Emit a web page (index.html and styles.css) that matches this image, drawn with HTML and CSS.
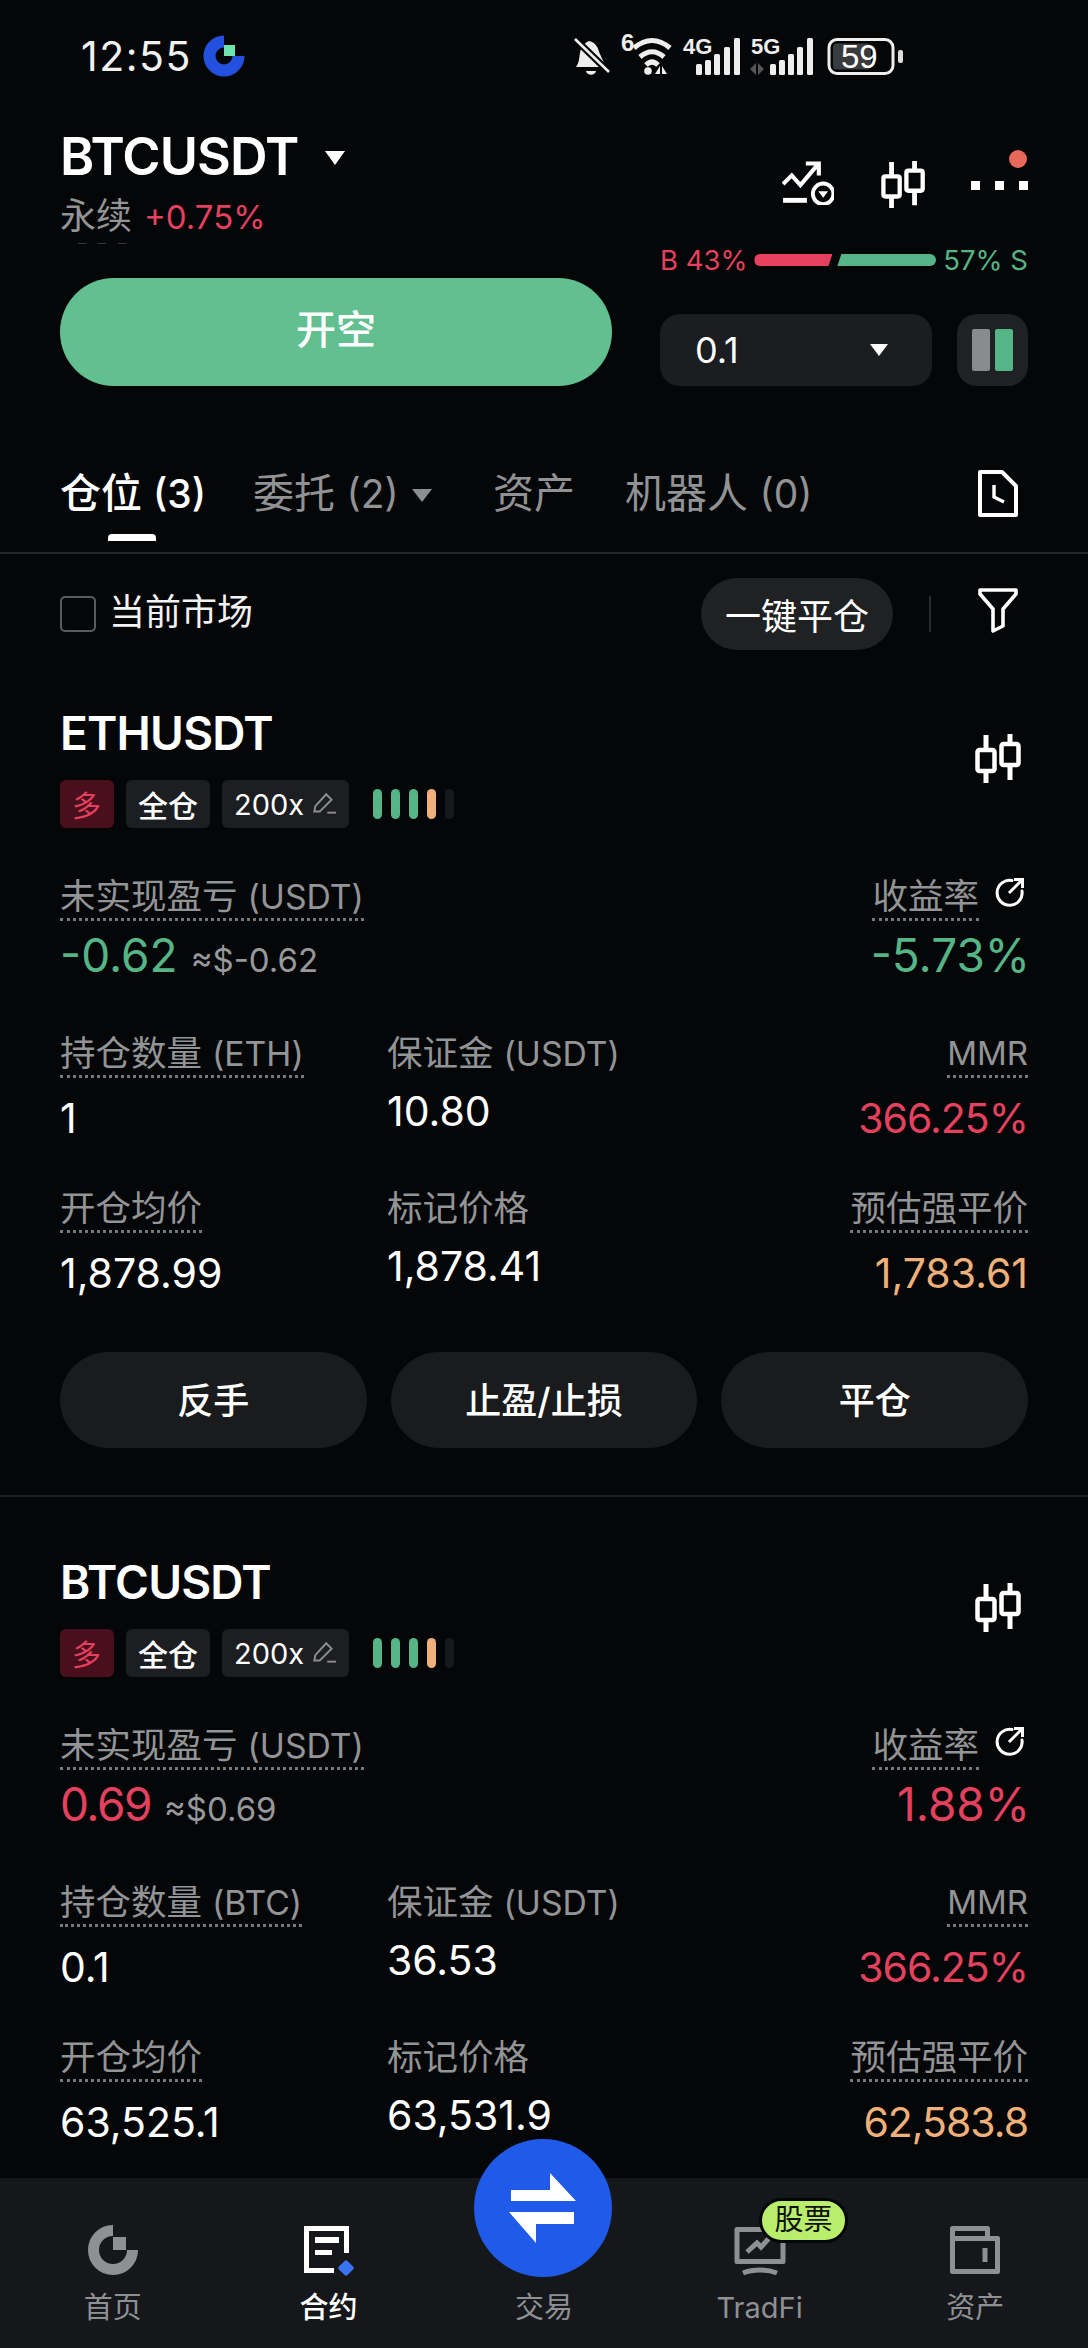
FILE: index.html
```html
<!DOCTYPE html>
<html lang="zh-CN">
<head>
    <meta charset="UTF-8">
    <meta name="viewport" content="width=device-width, initial-scale=1.0">
    <title>BTCUSDT 永续</title>
    <link rel="stylesheet" href="styles.css">
</head>
<body>
<div class="page">
    <svg class="defs" width="0" height="0">
        <symbol id="candles" viewBox="0 0 48 50">
            <path d="M11 1v48M35 0v46" stroke="currentColor" stroke-width="5" fill="none"/>
            <rect x="2.500" y="16" width="17" height="21" rx="2" fill="#050607" stroke="currentColor" stroke-width="4.500"/>
            <rect x="26.500" y="10" width="17" height="21" rx="2" fill="#050607" stroke="currentColor" stroke-width="4.500"/>
        </symbol>
        <symbol id="refresh" viewBox="0 0 30 30">
            <path d="M17 3.500A12.500 12.500 0 1 0 27 14" stroke="currentColor" stroke-width="3" fill="none" stroke-linecap="round"/>
            <path d="M14 16L27 3M19 2.500h8.500V11" stroke="currentColor" stroke-width="3" fill="none"/>
        </symbol>
        <symbol id="pen" viewBox="0 0 24 24">
            <path d="M3 19l1-5L14 3l5 5L8 19z" stroke="currentColor" stroke-width="1.800" fill="none"/>
            <path d="M15 20h8" stroke="currentColor" stroke-width="1.800"/>
        </symbol>
    </svg>

    <div class="status-bar">
        <span class="clock">12:55</span>
        <svg class="status-logo" width="42" height="42" viewBox="0 0 42 42">
            <path d="M21 6.500a14.500 14.500 0 1 0 14.500 14.500" stroke="#2450e0" stroke-width="12" fill="none"/>
            <rect x="21" y="10" width="11" height="11" fill="#6fe3b0"/>
        </svg>
        <svg class="status-icons" width="350" height="70" viewBox="565 20 350 70">
            <path d="M576 66c3-4 3-8 4-14 1-7 5-10 9-12 5 1 9 5 10 11l7 15z" fill="#eee"/>
            <path d="M586 70h10c-1 5-9 5-10 0z" fill="#eee"/>
            <path d="M575 38l34 33" stroke="#050607" stroke-width="7"/>
            <path d="M575 38l34 33" stroke="#eee" stroke-width="2.600"/>
            <text x="621" y="50" class="net-six">6</text>
            <path d="M634 47c12-10 24-10 36 0M640 56c8-7 16-7 24 0M646 64c4-4 8-4 12 0" stroke="#eee" stroke-width="5" fill="none"/>
            <circle cx="648" cy="70" r="3.800" fill="#eee"/>
            <path d="M655 73l5-8v8zM662 65l5 8h-5z" fill="#eee"/>
            <text x="683" y="53" class="net-text">4G</text>
            <g fill="#eee">
                <rect x="696" y="63" width="6" height="11" rx="1.500"/><rect x="705" y="59" width="6" height="15" rx="1.500"/>
                <rect x="714" y="53" width="6" height="21" rx="1.500"/><rect x="724" y="46" width="6" height="28" rx="1.500"/>
                <rect x="734" y="37" width="6" height="37" rx="1.500"/>
            </g>
            <text x="751" y="53" class="net-text">5G</text>
            <path d="M750 68l6-6v12zM758 62l6 6-6 6z" fill="#555"/>
            <g fill="#eee">
                <rect x="770" y="63" width="6" height="11" rx="1.500"/><rect x="779" y="59" width="6" height="15" rx="1.500"/>
                <rect x="788" y="53" width="6" height="21" rx="1.500"/><rect x="797" y="46" width="6" height="28" rx="1.500"/>
                <rect x="807" y="37" width="6" height="37" rx="1.500"/>
            </g>
            <rect x="829" y="38.500" width="64" height="34" rx="8" fill="#050607" stroke="#eee" stroke-width="3"/>
            <rect x="833" y="42.500" width="38" height="26" rx="4" fill="#3a3b3d"/>
            <text x="841" y="67" class="batt-text">59</text>
            <rect x="898" y="49" width="5" height="13" rx="2" fill="#ddd"/>
        </svg>
    </div>

    <div class="header">
        <div class="pair">
            <div class="pair-name">BTCUSDT <span class="tri tri-title"></span></div>
            <div class="pair-sub"><span class="muted">永续</span><span class="red change">+0.75%</span></div>
            <div class="pair-clip"><i></i><i></i><i></i></div>
        </div>
        <div class="header-icons">
            <svg width="52" height="44" viewBox="0 0 48 40">
                <path d="M1 21l8-8 8 9L33 3M22 2h12v11" stroke="#fff" stroke-width="3.800" fill="none"/>
                <path d="M1 36h22" stroke="#fff" stroke-width="4.500"/>
                <circle cx="38" cy="30" r="9.500" stroke="#fff" stroke-width="3.600" fill="none"/>
                <path d="M33.500 27.500h9l-4.500 6z" fill="#fff"/>
            </svg>
            <svg class="icon-candle" width="46" height="48"><use href="#candles"/></svg>
            <div class="more">
                <i></i><i></i><i></i>
                <span class="more-dot"></span>
            </div>
        </div>
    </div>

    <div class="order">
        <button class="btn-open">开空</button>
        <div class="order-side">
            <div class="ratio">
                <span class="red">B 43%</span>
                <div class="ratio-bar"><span class="ratio-buy"></span><span class="ratio-sell"></span></div>
                <span class="green">57% S</span>
            </div>
            <div class="order-controls">
                <div class="amount"><span>0.1</span><span class="tri tri-small"></span></div>
                <div class="layout-toggle"><i class="toggle-gray"></i><i class="toggle-green"></i></div>
            </div>
        </div>
    </div>

    <div class="tabs">
        <span class="tab active">仓位 <span class="en">(3)</span></span>
        <span class="tab tab-orders">委托 <span class="en">(2)</span> <span class="tri tri-tab"></span></span>
        <span class="tab tab-assets">资产</span>
        <span class="tab tab-bots">机器人 <span class="en">(0)</span></span>
        <svg class="tab-doc" width="40" height="47" viewBox="0 0 40 47">
            <path d="M2 2h22l14 14v29H2z" stroke="#fff" stroke-width="4" fill="none" stroke-linejoin="round"/>
            <path d="M16 15v12l10 5" stroke="#fff" stroke-width="3.400" fill="none"/>
        </svg>
    </div>

    <div class="toolbar">
        <label class="market"><span class="checkbox"></span><span class="market-text">当前市场</span></label>
        <button class="close-all">一键平仓</button>
        <span class="toolbar-sep"></span>
        <svg class="filter" width="40" height="46" viewBox="0 0 40 46">
            <path d="M2 2h36v4L25 21v17l-10 5V21L2 6z" stroke="#fff" stroke-width="3.600" fill="none" stroke-linejoin="round"/>
        </svg>
    </div>

    <div class="position">
        <div class="pos-head">
            <div class="pos-title">ETHUSDT</div>
            <svg class="pos-candle" width="48" height="50"><use href="#candles"/></svg>
        </div>
        <div class="tags">
            <span class="tag tag-long">多</span>
            <span class="tag tag-mode">全仓</span>
            <span class="tag">200x <svg class="tag-pen" width="26" height="26"><use href="#pen"/></svg></span>
            <div class="risk"><i class="g"></i><i class="g"></i><i class="g"></i><i class="o"></i><i></i></div>
        </div>
        <div class="pnl-row">
            <div>
                <span class="label dotted">未实现盈亏 <span class="en">(USDT)</span></span>
                <div class="pnl"><span class="value-lg green">-0.62</span><span class="approx">≈$-0.62</span></div>
            </div>
            <div class="right">
                <span class="label dotted">收益率</span><svg class="refresh" width="30" height="30"><use href="#refresh"/></svg>
                <div class="pnl"><span class="value-lg green">-5.73%</span></div>
            </div>
        </div>
        <div class="grid">
            <div class="cell"><span class="label dotted">持仓数量 <span class="en">(ETH)</span></span><div class="value">1</div></div>
            <div class="cell"><span class="label">保证金 <span class="en">(USDT)</span></span><div class="value value-up">10.80</div></div>
            <div class="cell right"><span class="label dotted en">MMR</span><div class="value value-narrow red">366.25%</div></div>
            <div class="cell"><span class="label dotted">开仓均价</span><div class="value">1,878.99</div></div>
            <div class="cell"><span class="label">标记价格</span><div class="value value-up">1,878.41</div></div>
            <div class="cell right"><span class="label dotted">预估强平价</span><div class="value orange">1,783.61</div></div>
        </div>
        <div class="actions">
            <button>反手</button>
            <button>止盈/止损</button>
            <button>平仓</button>
        </div>
    </div>

    <div class="position position-second">
        <div class="pos-head">
            <div class="pos-title">BTCUSDT</div>
            <svg class="pos-candle" width="48" height="50"><use href="#candles"/></svg>
        </div>
        <div class="tags">
            <span class="tag tag-long">多</span>
            <span class="tag tag-mode">全仓</span>
            <span class="tag">200x <svg class="tag-pen" width="26" height="26"><use href="#pen"/></svg></span>
            <div class="risk"><i class="g"></i><i class="g"></i><i class="g"></i><i class="o"></i><i></i></div>
        </div>
        <div class="pnl-row">
            <div>
                <span class="label dotted">未实现盈亏 <span class="en">(USDT)</span></span>
                <div class="pnl"><span class="value-lg red tight">0.69</span><span class="approx">≈$0.69</span></div>
            </div>
            <div class="right">
                <span class="label dotted">收益率</span><svg class="refresh" width="30" height="30"><use href="#refresh"/></svg>
                <div class="pnl"><span class="value-lg red">1.88%</span></div>
            </div>
        </div>
        <div class="grid">
            <div class="cell"><span class="label dotted">持仓数量 <span class="en">(BTC)</span></span><div class="value">0.1</div></div>
            <div class="cell"><span class="label">保证金 <span class="en">(USDT)</span></span><div class="value value-up">36.53</div></div>
            <div class="cell right"><span class="label dotted en">MMR</span><div class="value value-narrow red">366.25%</div></div>
            <div class="cell"><span class="label dotted">开仓均价</span><div class="value">63,525.1</div></div>
            <div class="cell"><span class="label">标记价格</span><div class="value value-up">63,531.9</div></div>
            <div class="cell right"><span class="label dotted">预估强平价</span><div class="value value-narrow orange">62,583.8</div></div>
        </div>
    </div>

    <nav class="nav">
        <div class="nav-item">
            <svg width="50" height="52" viewBox="0 0 50 52">
                <path d="M25 6.500a19.500 19.500 0 1 0 19.500 19.500" stroke="#8e9093" stroke-width="11" fill="none"/>
                <rect x="25" y="13" width="13" height="13" fill="#8e9093"/>
            </svg>
            <span>首页</span>
        </div>
        <div class="nav-item current">
            <svg width="52" height="52" viewBox="0 0 52 52">
                <path d="M44.500 29V4.500h-40v42H32" stroke="#fff" stroke-width="5" fill="none"/>
                <path d="M13 13h24v6H13zM13 26h17v5H13z" fill="#fff"/>
                <rect x="38" y="38" width="12" height="12" rx="2" transform="rotate(45 44 44)" fill="#3a73f0"/>
            </svg>
            <span>合约</span>
        </div>
        <div class="nav-item nav-trade"><span>交易</span></div>
        <div class="nav-item">
            <svg width="54" height="52" viewBox="0 0 54 52">
                <path d="M4 5.500h46v32H4z" stroke="#8e9093" stroke-width="5" fill="none" stroke-linejoin="round"/>
                <path d="M14 28l10-9 4 4 9-10" stroke="#8e9093" stroke-width="5" fill="none"/>
                <path d="M10 49c10-4 24-4 34 0" stroke="#8e9093" stroke-width="5" fill="none"/>
            </svg>
            <span>TradFi</span>
        </div>
        <div class="nav-item">
            <svg width="52" height="52" viewBox="0 0 52 52">
                <path d="M3.500 14.500V4.500h35v10M3.500 14.500h45v33h-45z" stroke="#8e9093" stroke-width="5" fill="none" stroke-linejoin="round"/>
                <path d="M36 24v14" stroke="#8e9093" stroke-width="5"/>
            </svg>
            <span>资产</span>
        </div>
        <button class="trade-btn">
            <svg width="68" height="70" viewBox="0 0 68 70">
                <path d="M41 0l26 28H2V17h39zM0 39h65v12H27v19z" fill="#fff"/>
            </svg>
        </button>
        <span class="stock-badge">股票</span>
    </nav>
</div>
</body>
</html>
```

FILE: styles.css
```css
* {
    box-sizing: border-box;
}
body {
    margin: 0;
    background-color: #050607;
    font-family: Inter, "Noto Sans CJK SC", sans-serif;
    color: #fff;
}
button {
    font-family: inherit;
    border: none;
    color: #fff;
    padding: 0;
}
.defs {
    position: absolute;
}
.page {
    position: relative;
    width: 1088px;
    height: 2348px;
    overflow: hidden;
    background-color: #050607;
}
.red {
    color: #e4415f;
}
.green {
    color: #55b586;
}
.orange {
    color: #efb07a;
}
.muted {
    color: #939496;
}

/* status bar */
.status-bar {
    display: flex;
    align-items: center;
    height: 112px;
    padding-left: 81px;
}
.clock {
    font-size: 41px;
    letter-spacing: 1.500px;
    color: #f2f2f2;
    width: 122px;
}
.status-icons {
    margin-left: 320px;
}
.net-text {
    font: 700 22px "Liberation Sans", sans-serif;
    fill: #eee;
}
.net-six {
    font: 700 24px "Liberation Sans", sans-serif;
    fill: #eee;
}
.batt-text {
    font: 400 33px "Liberation Sans", sans-serif;
    fill: #fff;
}

/* header */
.header {
    display: flex;
    justify-content: space-between;
    padding: 11px 60px 0;
    height: 128px;
}
.pair-name {
    font-size: 52px;
    font-weight: 600;
    line-height: 68px;
    letter-spacing: -0.900px;
}
.pair-sub {
    font-size: 36px;
    line-height: 50px;
    white-space: nowrap;
}
.change {
    font-size: 33px;
    margin-left: 12px;
}
.pair-clip {
    display: flex;
    gap: 12px;
    margin: 1px 0 0 18px;
}
.pair-clip i {
    width: 8px;
    height: 1px;
    background-color: #3a3b3d;
}
.tri {
    display: inline-block;
    width: 0;
    height: 0;
    border-style: solid;
    border-color: #fff transparent transparent transparent;
}
.tri-title {
    border-width: 14px 10px 0 10px;
    vertical-align: 10px;
    margin-left: 14px;
}
.header-icons {
    display: flex;
    align-items: flex-start;
    padding-top: 38px;
}
.icon-candle {
    margin-left: 47px;
    color: #fff;
}
.more {
    position: relative;
    display: flex;
    gap: 15px;
    margin-left: 44px;
    padding-top: 20px;
}
.more i {
    width: 9px;
    height: 9px;
    background-color: #fff;
}
.more-dot {
    position: absolute;
    right: 1px;
    top: -11px;
    width: 18px;
    height: 18px;
    border-radius: 50%;
    background-color: #e8695a;
}

/* order row */
.order {
    display: flex;
    justify-content: space-between;
    padding: 0 60px;
    height: 146px;
}
.order .btn-open {
    width: 552px;
    height: 108px;
    margin-top: 38px;
    padding-bottom: 10px;
    border-radius: 54px;
    background-color: #62bf8f;
    font-size: 40px;
    font-weight: 500;
}
.order-side {
    width: 368px;
}
.ratio {
    display: flex;
    align-items: center;
    justify-content: space-between;
    height: 40px;
    font-size: 27.500px;
    white-space: nowrap;
}
.ratio-bar {
    display: flex;
    gap: 5px;
    width: 182px;
}
.ratio-buy,
.ratio-sell {
    display: block;
    height: 12px;
}
.ratio-buy {
    width: 78px;
    background-color: #e4415f;
    border-radius: 6px 0 0 6px;
    clip-path: polygon(0 0, 100% 0, 95% 100%, 0 100%);
}
.ratio-sell {
    flex: 1;
    background-color: #55b586;
    border-radius: 0 6px 6px 0;
    clip-path: polygon(4% 0, 100% 0, 100% 100%, 0 100%);
}
.order-controls {
    display: flex;
    justify-content: space-between;
    margin-top: 34px;
}
.amount {
    display: flex;
    align-items: center;
    justify-content: space-between;
    width: 272px;
    height: 72px;
    padding: 0 44px 0 35px;
    border-radius: 20px;
    background-color: #1c1d20;
    font-size: 36px;
}
.tri-small {
    border-width: 12px 9px 0 9px;
}
.layout-toggle {
    display: flex;
    align-items: center;
    justify-content: center;
    gap: 5px;
    width: 71px;
    height: 72px;
    border-radius: 20px;
    background-color: #1f2123;
}
.layout-toggle i {
    width: 18px;
    height: 42px;
    border-radius: 2px;
}
.toggle-gray {
    background-color: #8a8b8e;
}
.toggle-green {
    background-color: #55b586;
}

/* tabs */
.tabs {
    position: relative;
    display: flex;
    align-items: center;
    height: 94px;
    margin-top: 74px;
    padding: 0 70px 26px 60px;
    border-bottom: 2px solid #232426;
    font-size: 41px;
    color: #919294;
    white-space: nowrap;
}
.tab {
    line-height: 50px;
}
.en {
    font-size: 0.950em;
}
.tab.active {
    position: relative;
    color: #fff;
    font-weight: 500;
    width: 193px;
}
.tab.active::after {
    content: "";
    position: absolute;
    left: 48px;
    bottom: -22px;
    width: 48px;
    height: 7px;
    border-radius: 4px 4px 0 0;
    background-color: #fff;
}
.tab-orders {
    width: 240px;
}
.tab-assets {
    width: 132px;
}
.tri-tab {
    border-width: 13px 10px 0 10px;
    border-top-color: #8d8e90;
    vertical-align: 6px;
    margin-left: 2px;
}
.tab-doc {
    margin-left: auto;
}

/* toolbar */
.toolbar {
    display: flex;
    align-items: center;
    height: 72px;
    margin-top: 24px;
    padding: 0 70px 0 60px;
}
.market {
    display: flex;
    align-items: center;
    gap: 13px;
    color: #f2f2f2;
}
.market-text {
    font-size: 36px;
    line-height: 44px;
    margin-bottom: 4px;
}
.checkbox {
    width: 36px;
    height: 36px;
    border: 2.500px solid #5a5b5e;
    border-radius: 5px;
}
.close-all {
    width: 192px;
    height: 72px;
    margin-left: auto;
    border-radius: 36px;
    background-color: #1f2123;
    font-size: 36px;
}
.toolbar-sep {
    width: 2px;
    height: 36px;
    margin: 0 47px 0 36px;
    background-color: #2a2b2d;
}
.filter {
    margin-top: -6px;
}

/* position card */
.position {
    padding: 0 60px;
    margin-top: 53px;
    height: 794px;
    border-bottom: 2px solid #1d1e20;
}
.position-second {
    margin-top: 55px;
    border-bottom: none;
}
.pos-head {
    display: flex;
    justify-content: space-between;
    align-items: flex-start;
    height: 55px;
}
.pos-title {
    font-size: 46px;
    font-weight: 600;
    line-height: 60px;
    letter-spacing: -0.800px;
}
.pos-candle {
    margin: 31px 5px 0 0;
    color: #fff;
    flex-shrink: 0;
}
.tags {
    display: flex;
    align-items: center;
    gap: 12px;
    height: 48px;
    margin-top: 22px;
}
.tag {
    display: flex;
    align-items: center;
    height: 48px;
    padding: 0 12px;
    border-radius: 6px;
    background-color: #1d1e21;
    font-size: 29px;
    white-space: nowrap;
}
.tag-long {
    width: 54px;
    background-color: #4a0f1c;
    color: #e4415f;
}
.tag-mode {
    font-size: 30px;
    font-weight: 500;
}
.tag-pen {
    color: #8d8e90;
    margin-left: 7px;
}
.risk {
    display: flex;
    gap: 9px;
    margin-left: 12px;
}
.risk i {
    width: 9px;
    height: 30px;
    border-radius: 5px;
    background-color: #18191b;
}
.risk .g {
    background-color: #55b586;
}
.risk .o {
    background-color: #efb07a;
}
.pnl-row {
    display: flex;
    justify-content: space-between;
    margin-top: 47px;
}
.right {
    text-align: right;
}
.label {
    display: inline-block;
    font-size: 35.500px;
    line-height: 43px;
    color: #939496;
    white-space: nowrap;
}
.label.en {
    font-size: 33px;
}
.dotted {
    border-bottom: 3px dotted #77787a;
}
.refresh {
    color: #fff;
    margin: 0 3px 0 16px;
    vertical-align: 2px;
}
.pnl {
    height: 58px;
    margin-top: 5px;
    white-space: nowrap;
}
.value-lg {
    font-size: 46px;
    line-height: 58px;
}
.right .value-lg {
    margin-right: -2px;
}
.tight {
    letter-spacing: -1.500px;
}
.approx {
    font-size: 33px;
    color: #97989a;
    margin-left: 13px;
}
.grid {
    display: grid;
    grid-template-columns: 327px 1fr auto;
    row-gap: 44px;
    margin-top: 48px;
}
.value {
    font-size: 41px;
    line-height: 50px;
    margin-top: 15px;
    white-space: nowrap;
}
.value-up {
    margin-top: 11px;
}
.value-narrow {
    letter-spacing: -1px;
}
.actions {
    display: flex;
    gap: 24px;
    margin-top: 54px;
}
.actions button {
    flex: 1;
    height: 96px;
    padding-bottom: 4px;
    border-radius: 48px;
    background-color: #1a1b1d;
    font-size: 36px;
    font-weight: 500;
}

/* bottom nav */
.nav {
    position: absolute;
    left: 0;
    right: 0;
    bottom: 0;
    display: flex;
    justify-content: space-around;
    height: 170px;
    padding: 46px 5px 0;
    background-color: #15171a;
}
.nav-item {
    display: flex;
    flex-direction: column;
    align-items: center;
    width: 216px;
    font-size: 29px;
    color: #8e9093;
}
.nav-item svg {
    flex-shrink: 0;
}
.nav-item span {
    line-height: 40px;
    margin-top: 12px;
}
.nav-item.current {
    color: #fff;
    font-weight: 500;
}
.nav-trade span {
    margin-top: 64px;
}
.nav .trade-btn {
    position: absolute;
    left: 474px;
    top: -39px;
    width: 138px;
    height: 138px;
    border-radius: 50%;
    background-color: #1f5ae8;
    display: flex;
    align-items: center;
    justify-content: center;
}
.stock-badge {
    position: absolute;
    left: 759px;
    top: 20px;
    width: 89px;
    height: 45px;
    border: 3px solid #050607;
    border-radius: 23px;
    background-color: #b8ee6c;
    color: #111;
    font-size: 29px;
    line-height: 38px;
    text-align: center;
}
```
